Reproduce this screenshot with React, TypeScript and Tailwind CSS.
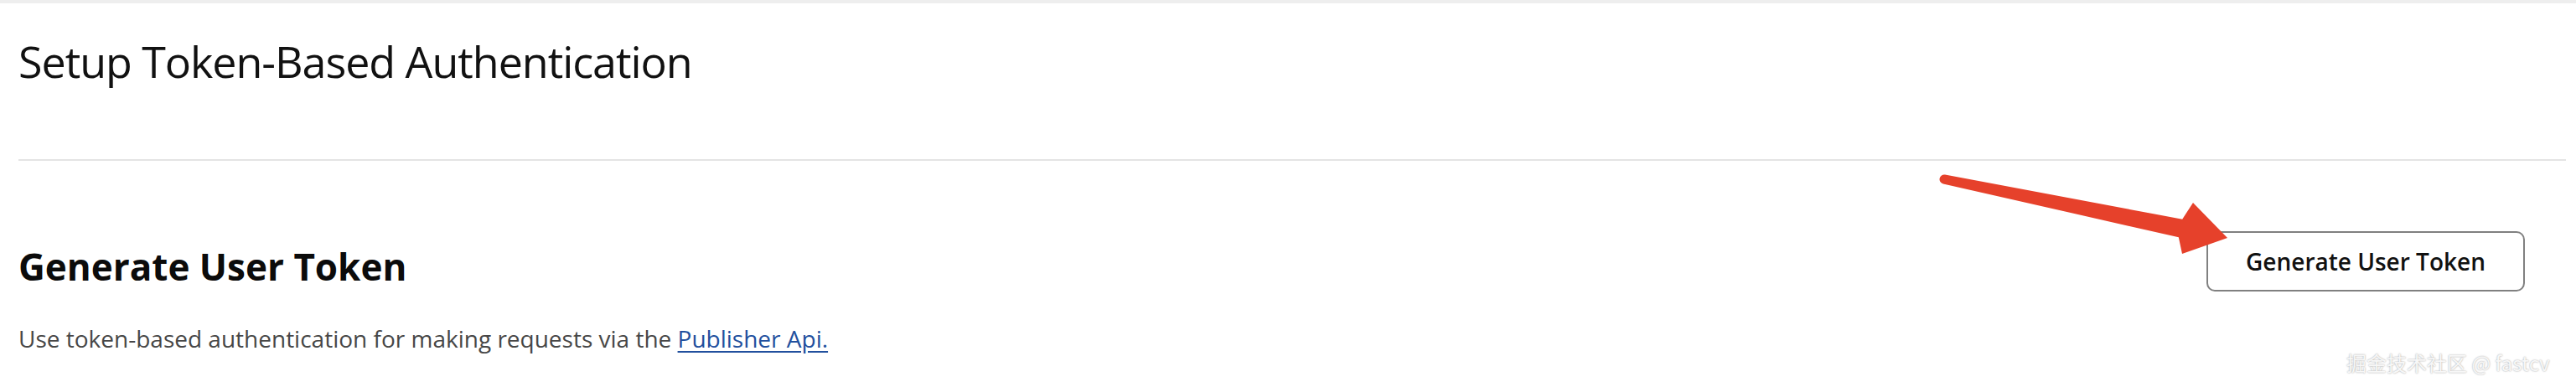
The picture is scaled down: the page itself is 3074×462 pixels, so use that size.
import React from "react";

const Arrow: React.FC = () => (
  <svg
    className="absolute inset-0 pointer-events-none"
    width="3074"
    height="462"
    viewBox="0 0 3074 462"
  >
    <path
      d="M2321.1 208.6 L2604.2 261.7 L2617 242 L2658 284 L2604 303 L2599.8 283.3 L2318.9 219.4 A5.5 5.5 0 0 1 2321.1 208.6 Z"
      fill="#e6412b"
      strokeLinejoin="round"
    />
  </svg>
);

export default function App() {
  return (
    <div className="relative w-[3074px] h-[462px] overflow-hidden bg-white font-['Open_Sans',sans-serif]">
      {/* top strip */}
      <div className="h-[4px] bg-[#eeeeee]" />

      <div className="pl-[22px] pr-[12px]">
        <h1 className="mt-[43px] text-[52px] leading-none font-normal text-[#111111] tracking-[-0.02em]">
          Setup Token-Based Authentication
        </h1>

        <div className="mt-[91px] border-t-2 border-[#e4e4e4]" />

        <div className="mt-[84px] flex items-start justify-between">
          <div className="mt-[20px]">
            <h2 className="text-[44px] leading-none font-bold text-[#0b0b0b]">
              Generate User Token
            </h2>
            <p className="mt-[50px] text-[28px] leading-none text-[#474747]">
              Use token-based authentication for making requests via the{" "}
              <a
                href="#"
                onClick={(e) => e.preventDefault()}
                className="text-[#22509e] underline underline-offset-4"
              >
                Publisher Api.
              </a>
            </p>
          </div>

          <button className="mr-[49px] w-[380px] h-[72px] rounded-[10px] border-2 border-[#808080] bg-white text-[28px] font-semibold text-[#111111]">
            Generate User Token
          </button>
        </div>
      </div>

      <Arrow />

      {/* watermark */}
      <div className="absolute left-[2800px] top-[421px] text-[24px] leading-none text-[#f7f7f7] [text-shadow:0_0_2px_rgba(0,0,0,0.4)] font-['Noto_Sans_CJK_SC',sans-serif]">
        掘金技术社区 @ fastcv
      </div>
    </div>
  );
}
